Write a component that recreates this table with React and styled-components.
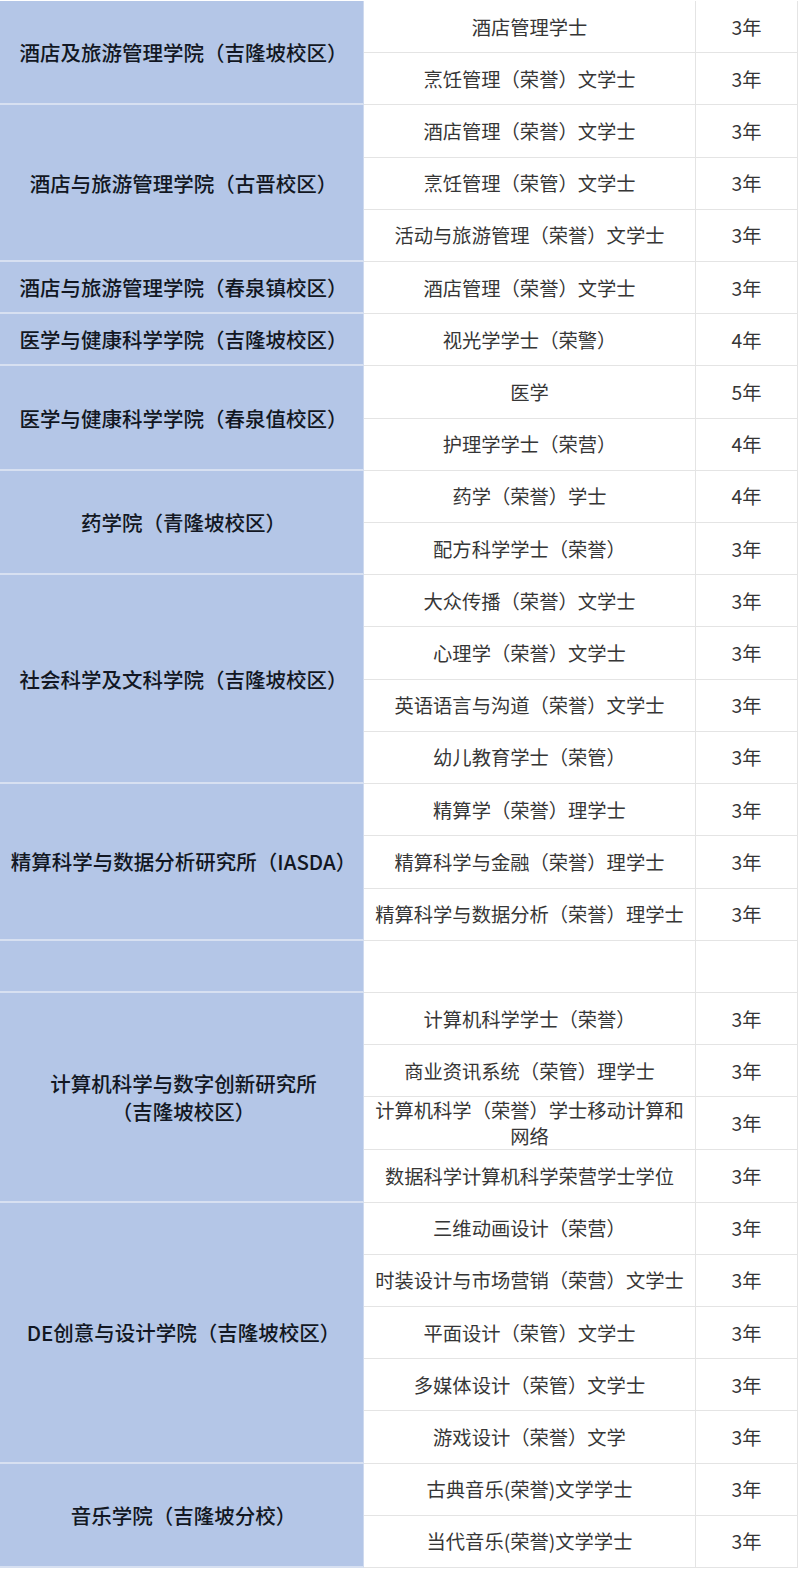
import React from "react";
import styled, { createGlobalStyle } from "styled-components";

const Global = createGlobalStyle`
  html, body { margin: 0; padding: 0; background: #ffffff; }
  body { font-family: "Noto Sans CJK SC", "Noto Sans", sans-serif; }
`;

const groups = [
  { name: "酒店及旅游管理学院（吉隆坡校区）", items: [["酒店管理学士", "3年"], ["烹饪管理（荣誉）文学士", "3年"]] },
  { name: "酒店与旅游管理学院（古晋校区）", items: [["酒店管理（荣誉）文学士", "3年"], ["烹饪管理（荣管）文学士", "3年"], ["活动与旅游管理（荣誉）文学士", "3年"]] },
  { name: "酒店与旅游管理学院（春泉镇校区）", items: [["酒店管理（荣誉）文学士", "3年"]] },
  { name: "医学与健康科学学院（吉隆坡校区）", items: [["视光学学士（荣警）", "4年"]] },
  { name: "医学与健康科学学院（春泉值校区）", items: [["医学", "5年"], ["护理学学士（荣营）", "4年"]] },
  { name: "药学院（青隆坡校区）", items: [["药学（荣誉）学士", "4年"], ["配方科学学士（荣誉）", "3年"]] },
  { name: "社会科学及文科学院（吉隆坡校区）", items: [["大众传播（荣誉）文学士", "3年"], ["心理学（荣誉）文学士", "3年"], ["英语语言与沟道（荣誉）文学士", "3年"], ["幼儿教育学士（荣管）", "3年"]] },
  { name: "精算科学与数据分析研究所（IASDA）", items: [["精算学（荣誉）理学士", "3年"], ["精算科学与金融（荣誉）理学士", "3年"], ["精算科学与数据分析（荣誉）理学士", "3年"]] },
  { name: "", items: [["", ""]] },
  { name: ["计算机科学与数字创新研究所", "（吉隆坡校区）"], items: [["计算机科学学士（荣誉）", "3年"], ["商业资讯系统（荣管）理学士", "3年"], [["计算机科学（荣誉）学士移动计算和", "网络"], "3年"], ["数据科学计算机科学荣营学士学位", "3年"]] },
  { name: "DE创意与设计学院（吉隆坡校区）", items: [["三维动画设计（荣营）", "3年"], ["时装设计与市场营销（荣营）文学士", "3年"], ["平面设计（荣管）文学士", "3年"], ["多媒体设计（荣管）文学士", "3年"], ["游戏设计（荣誉）文学", "3年"]] },
  { name: "音乐学院（吉隆坡分校）", items: [["古典音乐(荣誉)文学学士", "3年"], ["当代音乐(荣誉)文学学士", "3年"]] },
];

const Table = styled.div`
  display: grid;
  grid-template-columns: 364px 332px 102px 2px;
  grid-template-rows: repeat(30, 1fr);
  height: 1567px;
  padding-top: 1px;
  width: 800px;
  background: #ffffff;
`;

const GroupCell = styled.div`
  grid-column: 1;
  grid-row: ${(p) => p.$row} / span ${(p) => p.$span};
  background: #b4c6e7;
  border-bottom: 2px solid #d7e0f1;
  border-right: 1px solid #cfdaee;
  display: flex;
  align-items: center;
  justify-content: center;
  text-align: center;
  padding-left: 4px;
  font-size: 20.5px;
  font-weight: 500;
  line-height: 28px;
  color: #121723;
  box-sizing: border-box;
  white-space: nowrap;
`;

const Cell = styled.div`
  grid-column: ${(p) => p.$col};
  grid-row: ${(p) => p.$row};
  border-bottom: 1px solid #e4e4e4;
  border-right: 1px solid #e4e4e4;
  display: flex;
  align-items: center;
  justify-content: center;
  text-align: center;
  font-size: 19.3px;
  font-weight: 400;
  line-height: 26px;
  color: #363636;
  box-sizing: border-box;
  padding: 0 4px;
  white-space: nowrap;
`;

const Lines = ({ value }) =>
  Array.isArray(value)
    ? value.map((v, i) => (
        <React.Fragment key={i}>
          {i > 0 && <br />}
          {v}
        </React.Fragment>
      ))
    : value;

export default function App() {
  let row = 1;
  const cells = [];
  groups.forEach((g, gi) => {
    const start = row;
    cells.push(
      <GroupCell key={`g${gi}`} $row={start} $span={g.items.length}>
        <div>
          <Lines value={g.name} />
        </div>
      </GroupCell>
    );
    g.items.forEach((it, ii) => {
      cells.push(
        <Cell key={`p${gi}-${ii}`} $col={2} $row={row}>
          <div>
            <Lines value={it[0]} />
          </div>
        </Cell>
      );
      cells.push(
        <Cell key={`y${gi}-${ii}`} $col={3} $row={row}>
          {it[1]}
        </Cell>
      );
      row += 1;
    });
  });
  return (
    <>
      <Global />
      <Table>{cells}</Table>
    </>
  );
}
